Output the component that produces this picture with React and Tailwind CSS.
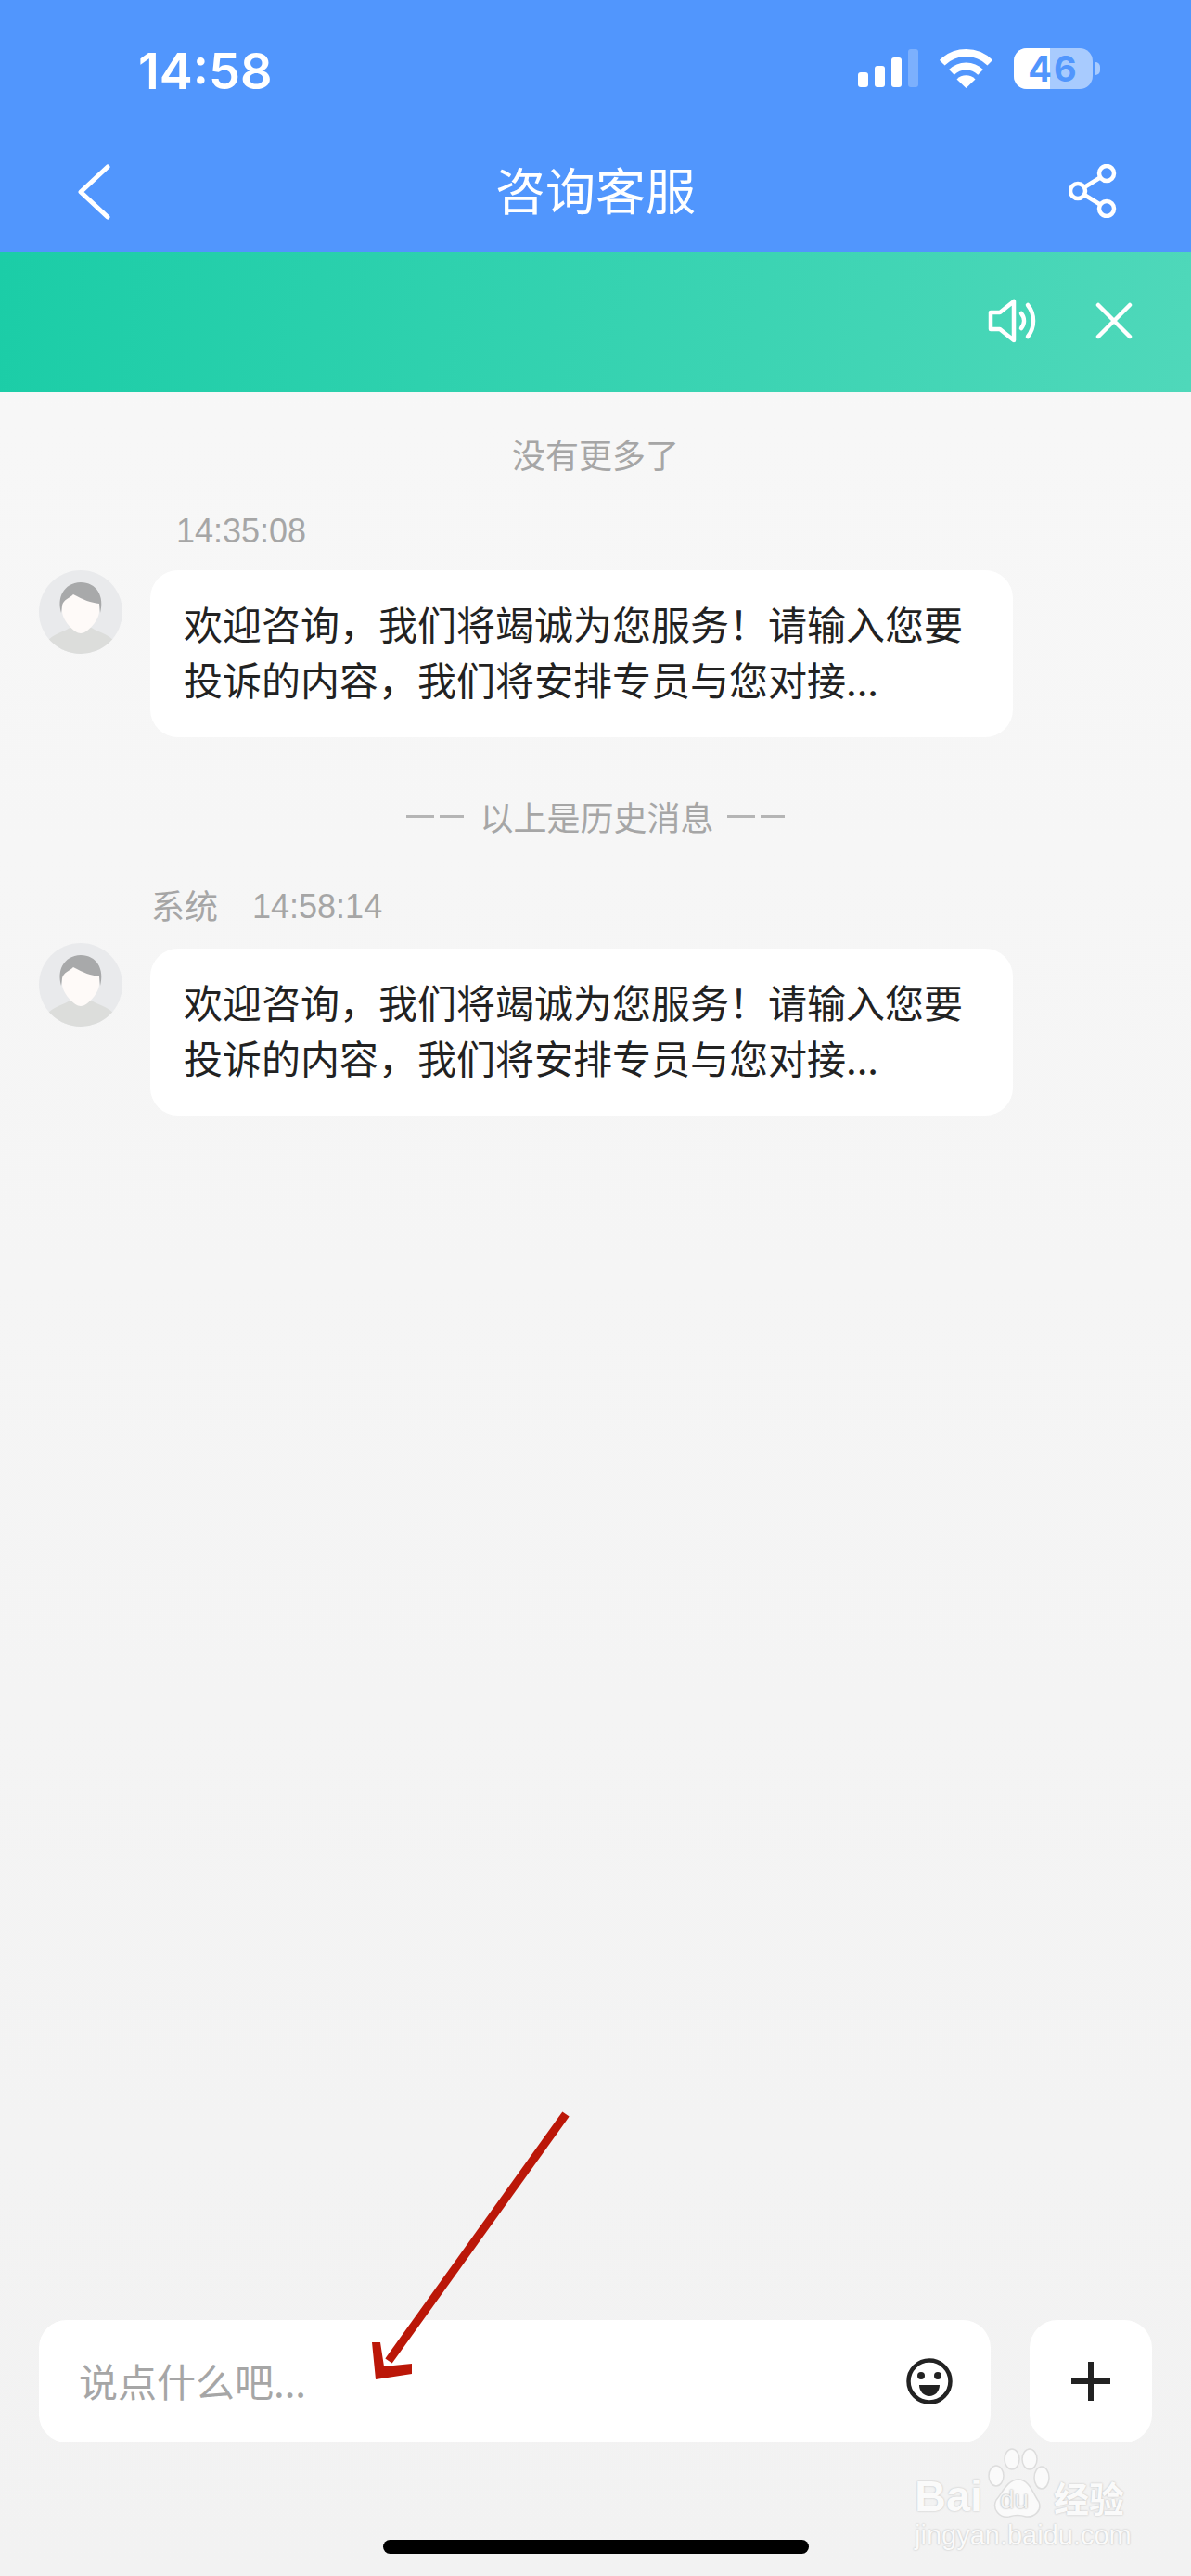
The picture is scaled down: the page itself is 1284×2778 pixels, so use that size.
const cjk = "font-['Noto_Sans_CJK_SC','Liberation_Sans',sans-serif]";
const greeting = "欢迎咨询\uFF0C我们将竭诚为您服务\uFF01请输入您要投诉的内容\uFF0C我们将安排专员与您对接...";

function StatusBar() {
  return (
    <div className="flex h-[150px] items-start justify-between pl-[149px] pr-[98px] pt-[47px]">
      <span className="font-['Inter',sans-serif] text-[54px] font-semibold leading-[60px] text-white">14:58</span>
      <div className="flex items-start pt-[6px]">
        <div className="flex h-[41px] items-end gap-[7px]">
          <div className="h-[16px] w-[11px] rounded-[3px] bg-white" />
          <div className="h-[23px] w-[11px] rounded-[3px] bg-white" />
          <div className="h-[32px] w-[11px] rounded-[3px] bg-white" />
          <div className="h-[41px] w-[11px] rounded-[3px] bg-white/25" />
        </div>
        <svg className="ml-[23px] h-[42px] w-[57px]" viewBox="0 0 57 42" fill="none">
          <path d="M2.7 14.7A36.5 36.5 0 0 1 54.3 14.7" stroke="#fff" strokeWidth="8" />
          <path d="M12.9 24.9A22 22 0 0 1 44.1 24.9" stroke="#fff" strokeWidth="8" />
          <path d="M28.5 42L18.5 32.5A14 14 0 0 1 38.5 32.5Z" fill="#fff" />
        </svg>
        <div className="relative ml-[23px] flex h-[44px] w-[85px] -translate-y-px overflow-hidden rounded-[14px] bg-white/50">
          <div className="h-full w-[39px] bg-white" />
          <span className="absolute inset-0 text-center font-['Inter',sans-serif] text-[38px] font-bold leading-[44px] tracking-[2px] text-[#5196fd]">46</span>
        </div>
        <div className="ml-[3px] mt-[14px] h-[14px] w-[5px] rounded-r-full bg-white/50" />
      </div>
    </div>
  );
}

function NavBar() {
  return (
    <div className="relative flex h-[122px] items-start justify-between pl-[83px] pr-[80px] pt-[27px]">
      <svg className="h-[60px] w-[36px]" viewBox="0 0 36 60" fill="none">
        <path d="M33 3L4 30L33 57" stroke="#fff" strokeWidth="5" strokeLinecap="round" strokeLinejoin="round" />
      </svg>
      <span className={`${cjk} absolute left-0 right-0 top-[23px] text-center text-[54px] leading-[62px] text-white`}>咨询客服</span>
      <svg className="h-[58px] w-[52px]" viewBox="0 0 52 58" fill="none" stroke="#fff" strokeWidth="4.5">
        <circle cx="41" cy="10" r="8" />
        <circle cx="10" cy="29" r="8" />
        <circle cx="41" cy="48" r="8" />
        <path d="M17 25L34 14.500M17 33L34 43.500" />
      </svg>
    </div>
  );
}

function NoticeBar() {
  return (
    <div className="flex h-[151px] items-center justify-end gap-[62px] bg-linear-[100deg] from-[#1bcda7] to-[#4fd8ba] pr-[63px]">
      <svg className="-translate-y-[2px] h-[48px] w-[54px]" viewBox="0 0 54 48" fill="none" stroke="#fff" strokeWidth="4.500" strokeLinejoin="round" strokeLinecap="round">
        <path d="M3 15H13L28 3V45L13 33H3Z" />
        <path d="M36 16C40 21 40 27 36 32" />
        <path d="M43 7C51 17 51 31 43 41" />
      </svg>
      <svg className="-translate-y-[2px] h-[40px] w-[40px]" viewBox="0 0 40 40" fill="none" stroke="#fff" strokeWidth="4.500" strokeLinecap="round">
        <path d="M3 3L37 37M37 3L3 37" />
      </svg>
    </div>
  );
}

function Avatar({ id }) {
  return (
    <svg className="h-[90px] w-[90px] shrink-0" viewBox="0 0 90 90">
      <defs>
        <clipPath id={id}>
          <circle cx="45" cy="45" r="45" />
        </clipPath>
      </defs>
      <circle cx="45" cy="45" r="45" fill="#e9eaec" />
      <g clipPath={`url(#${id})`}>
        <path d="M8 78C14 68 30 66 36 60H54C60 66 76 68 82 78V90H8Z" fill="#dcdddb" />
        <path d="M25 32C25 20 65 20 65 32V44C65 54 52 68 45 68C38 68 25 54 25 44Z" fill="#fefaf8" />
        <path d="M24 46C19 30 26 14 45 13C62 13 71 28 66 46L65 36C56 35 48 32 37 26C33 30 26 32 25 38Z" fill="#a8a9aa" />
      </g>
    </svg>
  );
}

function Bubble() {
  return (
    <div className={`${cjk} w-[930px] rounded-[30px] bg-white pb-[33px] pl-[36px] pr-[38px] pt-[27px] text-[42px] leading-[60px] text-[#222]`}>
      {greeting}
    </div>
  );
}

function Watermark() {
  return (
    <div className="absolute bottom-[28px] right-[68px] h-[110px] w-[230px] text-[#fafafa]">
      <span className="absolute left-0 top-[30px] font-['Liberation_Sans',sans-serif] text-[47px] font-bold leading-[44px] [text-shadow:0_0_2px_#b5b5b5]">Bai</span>
      <svg className="absolute left-[78px] top-0 h-[76px] w-[70px]" viewBox="0 0 70 76" fill="#fafafa" stroke="#ddd" strokeWidth="1.500">
        <ellipse cx="10" cy="30" rx="8" ry="11" />
        <ellipse cx="27" cy="12" rx="8" ry="11" />
        <ellipse cx="46" cy="12" rx="8" ry="11" />
        <ellipse cx="59" cy="32" rx="8" ry="12" />
        <path d="M34 34C46 34 50 50 56 58C60 68 50 75 42 74C36 72 30 72 24 74C14 76 5 66 10 56C17 48 22 34 34 34Z" />
      </svg>
      <span className="absolute left-[92px] top-[40px] font-['Liberation_Sans',sans-serif] text-[28px] leading-[32px] text-[#f2f2f2] [text-shadow:0_0_2px_#999]">du</span>
      <span className={`${cjk} absolute left-[150px] top-[32px] text-[38px] font-bold leading-[42px] [text-shadow:0_0_2px_#b5b5b5]`}>经验</span>
      <span className="absolute left-0 top-[78px] font-['Liberation_Sans',sans-serif] text-[29px] leading-[32px] [text-shadow:0_0_2px_#b5b5b5]">jingyan.baidu.com</span>
    </div>
  );
}

export default function App() {
  return (
    <div className="relative flex h-[2778px] w-[1284px] flex-col overflow-hidden bg-gradient-to-b from-[#f8f8f8] to-[#f2f2f2]">
      {/* Header */}
      <div className="bg-[#5196fd]">
        <StatusBar />
        <NavBar />
      </div>
      <NoticeBar />

      {/* Messages */}
      <div className={`${cjk} flex flex-col text-[#a6a6a6]`}>
        <div className="mt-[41px] text-center text-[36px] leading-[50px]">没有更多了</div>
        <div className="mt-[39px] pl-[190px] font-['Liberation_Sans',sans-serif] text-[36px] leading-[40px]">14:35:08</div>
        <div className="mt-[22px] flex items-start gap-[30px] pl-[42px]">
          <Avatar id="avatar-a" />
          <Bubble />
        </div>
        <div className="mt-[60px] flex items-center justify-center text-[36px] leading-[50px]">
          <span className="mr-[6px] h-[3px] w-[30px] bg-[#b5b5b5]" />
          <span className="mr-[17px] h-[3px] w-[26px] bg-[#b5b5b5]" />
          以上是历史消息
          <span className="ml-[14px] h-[3px] w-[30px] bg-[#b5b5b5]" />
          <span className="ml-[6px] h-[3px] w-[26px] bg-[#b5b5b5]" />
        </div>
        <div className="mt-[47px] flex gap-[37px] pl-[163px] text-[36px] leading-[46px]">
          <span>系统</span>
          <span className="translate-y-[3px] font-['Liberation_Sans',sans-serif]">14:58:14</span>
        </div>
        <div className="mt-[19px] flex items-start gap-[30px] pl-[42px]">
          <Avatar id="avatar-b" />
          <div className="mt-[6px]">
            <Bubble />
          </div>
        </div>
      </div>

      {/* Composer */}
      <div className="mt-auto mb-[144px] flex gap-[42px] px-[42px]">
        <div className="flex h-[132px] w-[1026px] items-center justify-between rounded-[30px] bg-white pl-[43px] pr-[41px]">
          <span className={`${cjk} -translate-y-[2px] text-[42px] text-[#a6a6a6]`}>说点什么吧...</span>
          <svg className="h-[50px] w-[50px]" viewBox="0 0 50 50">
            <circle cx="25" cy="25" r="22.500" fill="none" stroke="#222" strokeWidth="4.500" />
            <circle cx="16" cy="19" r="4" fill="#222" />
            <circle cx="34" cy="19" r="4" fill="#222" />
            <path d="M14 29H36C36 36 31 41 25 41C19 41 14 36 14 29Z" fill="#222" />
          </svg>
        </div>
        <div className="flex h-[132px] w-[132px] items-center justify-center rounded-[30px] bg-white">
          <svg className="h-[42px] w-[42px]" viewBox="0 0 42 42">
            <path d="M18 0H24V18H42V24H24V42H18V24H0V18H18Z" fill="#222" />
          </svg>
        </div>
      </div>

      {/* Home indicator */}
      <div className="absolute bottom-[24px] left-[413px] h-[15px] w-[459px] rounded-full bg-black" />

      <Watermark />

      {/* Annotation arrow */}
      <svg className="absolute left-[390px] top-[2270px] h-[310px] w-[230px]" viewBox="390 2270 230 310">
        <path d="M610 2280L419 2546" stroke="#bb1708" strokeWidth="9" />
        <path d="M401 2526L410 2526L414 2552L444 2549L444 2560L405 2566Z" fill="#bb1708" />
      </svg>
    </div>
  );
}
